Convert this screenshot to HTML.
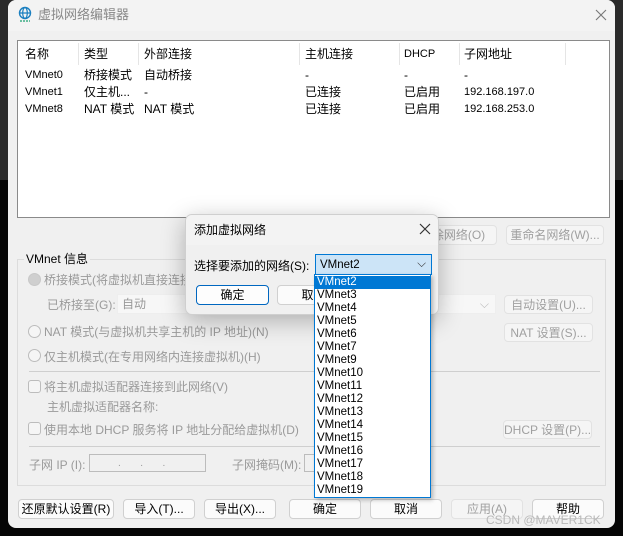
<!DOCTYPE html>
<html><head><meta charset="utf-8"><style>
*{box-sizing:border-box;margin:0;padding:0}
body{width:623px;height:536px;overflow:hidden;background:linear-gradient(#2a2a2a 0,#2a2a2a 180px,#050505 180px);font-family:"Liberation Sans","Noto Sans CJK SC",sans-serif;font-size:12px;line-height:14px;color:#000;position:relative}
.a{position:absolute;white-space:nowrap}
#win{left:8px;top:0;width:607px;height:528px;background:#f0f0f0;border-radius:8px;overflow:hidden}
.tb{left:0;top:0;width:607px;height:31px;background:#f3f3f3}
.btn{position:absolute;background:#fbfbfb;border:1px solid #d0d0d0;border-radius:4px;text-align:center;line-height:18px;font-size:12px}
.dis{color:#a0a0a0;background:#f5f5f5;border-color:#e2e2e2}
.g{color:#9a9a9a}
.radio{position:absolute;width:13px;height:13px;border:1px solid #bcbcbc;border-radius:50%;background:#f5f5f5}
.chk{position:absolute;width:13px;height:13px;border:1px solid #bcbcbc;border-radius:3px;background:#f5f5f5}
.dd div{height:13px;line-height:13px;padding-left:2px;font-size:11.5px}
</style></head><body>
<div id="win" class="a">
 <div class="a tb"></div>
 <svg class="a" style="left:10px;top:6px" width="14" height="16" viewBox="0 0 14 16"><circle cx="7" cy="7" r="5.5" fill="none" stroke="#1a7fc0" stroke-width="1.4"/><ellipse cx="7" cy="7" rx="2.3" ry="5.5" fill="none" stroke="#1a7fc0" stroke-width="1.2"/><line x1="1.5" y1="7" x2="12.5" y2="7" stroke="#1a7fc0" stroke-width="1.2"/><line x1="2" y1="15" x2="12" y2="15" stroke="#1aa070" stroke-width="1.2" stroke-dasharray="2 1"/></svg>
 <div class="a" style="left:30px;top:8px;font-size:13px;color:#888">虚拟网络编辑器</div>
 <svg class="a" style="left:587px;top:9px" width="12" height="12" viewBox="0 0 12 12"><path d="M1 1L11 11M11 1L1 11" stroke="#777" stroke-width="1.1"/></svg>
 <div class="a" style="left:9px;top:40px;width:593px;height:178px;background:#fff;border:1px solid #8a8a8a"></div>
 <div class="a" style="left:10px;top:41px;width:591px;height:24px;">
  <div class="a" style="left:60px;top:2px;width:1px;height:22px;background:#e5e5e5"></div>
  <div class="a" style="left:120px;top:2px;width:1px;height:22px;background:#e5e5e5"></div>
  <div class="a" style="left:281px;top:2px;width:1px;height:22px;background:#e5e5e5"></div>
  <div class="a" style="left:381px;top:2px;width:1px;height:22px;background:#e5e5e5"></div>
  <div class="a" style="left:441px;top:2px;width:1px;height:22px;background:#e5e5e5"></div>
  <div class="a" style="left:547px;top:2px;width:1px;height:22px;background:#e5e5e5"></div>
 </div>
 <div class="a" style="left:17px;top:47px">名称</div><div class="a" style="left:76px;top:47px">类型</div><div class="a" style="left:136px;top:47px">外部连接</div><div class="a" style="left:297px;top:47px">主机连接</div><div class="a" style="left:396px;top:47px;font-size:11px">DHCP</div><div class="a" style="left:456px;top:47px">子网地址</div>
 <div class="a" style="left:17px;top:68px;font-size:11px">VMnet0</div><div class="a" style="left:76px;top:68px">桥接模式</div><div class="a" style="left:136px;top:68px">自动桥接</div><div class="a" style="left:297px;top:68px">-</div><div class="a" style="left:396px;top:68px">-</div><div class="a" style="left:456px;top:68px">-</div>
 <div class="a" style="left:17px;top:85px;font-size:11px">VMnet1</div><div class="a" style="left:76px;top:85px">仅主机...</div><div class="a" style="left:136px;top:85px">-</div><div class="a" style="left:297px;top:85px">已连接</div><div class="a" style="left:396px;top:85px">已启用</div><div class="a" style="left:456px;top:85px;font-size:11px">192.168.197.0</div>
 <div class="a" style="left:17px;top:102px;font-size:11px">VMnet8</div><div class="a" style="left:76px;top:102px">NAT 模式</div><div class="a" style="left:136px;top:102px">NAT 模式</div><div class="a" style="left:297px;top:102px">已连接</div><div class="a" style="left:396px;top:102px">已启用</div><div class="a" style="left:456px;top:102px;font-size:11px">192.168.253.0</div>
 <div class="btn dis" style="left:400px;top:225px;width:89px;height:20px">移除网络(O)</div>
 <div class="btn dis" style="left:498px;top:225px;width:98px;height:20px">重命名网络(W)...</div>
 <div class="a" style="left:9px;top:259px;width:589px;height:227px;border:1px solid #dcdcdc"></div>
 <div class="a" style="left:16px;top:252px;background:#f0f0f0;padding:0 2px">VMnet 信息</div>
 <div class="radio" style="left:20px;top:273px;background:#cfcfcf;border-color:#c8c8c8"></div>
 <div class="a g" style="left:36px;top:273px">桥接模式(将虚拟机直接连接到外部网络)(B)</div>
 <div class="a g" style="left:39px;top:298px">已桥接至(G):</div>
 <div class="a" style="left:109px;top:294px;width:379px;height:20px;background:#f7f7f7;border:1px solid #eee;padding:2px 4px;color:#999">自动<span style="position:absolute;right:6px;color:#bbb">⌵</span></div>
 <div class="btn dis" style="left:496px;top:295px;width:89px;height:19px">自动设置(U)...</div>
 <div class="radio" style="left:20px;top:325px"></div>
 <div class="a g" style="left:36px;top:325px">NAT 模式(与虚拟机共享主机的 IP 地址)(N)</div>
 <div class="btn dis" style="left:496px;top:323px;width:89px;height:19px">NAT 设置(S)...</div>
 <div class="radio" style="left:20px;top:349px"></div>
 <div class="a g" style="left:36px;top:350px">仅主机模式(在专用网络内连接虚拟机)(H)</div>
 <div class="a" style="left:21px;top:371px;width:571px;height:1px;background:#cfcfcf"></div>
 <div class="chk" style="left:20px;top:380px"></div>
 <div class="a g" style="left:36px;top:380px">将主机虚拟适配器连接到此网络(V)</div>
 <div class="a g" style="left:39px;top:400px">主机虚拟适配器名称:</div>
 <div class="chk" style="left:20px;top:422px"></div>
 <div class="a g" style="left:36px;top:423px">使用本地 DHCP 服务将 IP 地址分配给虚拟机(D)</div>
 <div class="btn dis" style="left:495px;top:420px;width:89px;height:19px">DHCP 设置(P)...</div>
 <div class="a" style="left:21px;top:446px;width:571px;height:1px;background:#cfcfcf"></div>
 <div class="a g" style="left:21px;top:458px">子网 IP (I):</div>
 <div class="a" style="left:81px;top:454px;width:117px;height:18px;border:1px solid #bcbcbc;background:#f0f0f0;color:#999;font-size:10px;padding-left:28px;padding-top:2px">.&nbsp;&nbsp;&nbsp;&nbsp;&nbsp;&nbsp;&nbsp;.&nbsp;&nbsp;&nbsp;&nbsp;&nbsp;&nbsp;&nbsp;.</div>
 <div class="a g" style="left:224px;top:458px">子网掩码(M):</div>
 <div class="a" style="left:296px;top:454px;width:30px;height:18px;border:1px solid #bcbcbc;background:#f0f0f0"></div>
 <div class="btn" style="left:10px;top:499px;width:96px;height:20px">还原默认设置(R)</div>
 <div class="btn" style="left:115px;top:499px;width:72px;height:20px">导入(T)...</div>
 <div class="btn" style="left:196px;top:499px;width:72px;height:20px">导出(X)...</div>
 <div class="btn" style="left:281px;top:499px;width:72px;height:20px">确定</div>
 <div class="btn" style="left:362px;top:499px;width:72px;height:20px">取消</div>
 <div class="btn dis" style="left:443px;top:499px;width:72px;height:20px">应用(A)</div>
 <div class="btn" style="left:524px;top:499px;width:72px;height:20px">帮助</div>
 <div class="a" style="left:478px;top:513px;color:#b8b8b8;font-size:12px">CSDN @MAVER1CK</div>
</div>
<div class="a" style="left:185px;top:214px;width:254px;height:101px;background:#f0f0f0;border:1px solid #cfcfcf;border-radius:7px;box-shadow:0 6px 24px rgba(0,0,0,.28);overflow:hidden">
 <div class="a" style="left:0;top:0;width:254px;height:30px;background:#f3f3f3"></div>
 <div class="a" style="left:8px;top:8px">添加虚拟网络</div>
 <svg class="a" style="left:233px;top:8px" width="12" height="12" viewBox="0 0 12 12"><path d="M1 1L11 11M11 1L1 11" stroke="#333" stroke-width="1.2"/></svg>
 <div class="a" style="left:8px;top:44px">选择要添加的网络(S):</div>
 <div class="a" style="left:129px;top:39px;width:117px;height:21px;background:#cce4f7;border:1px solid #0078d4;padding:3px 4px;font-size:11.5px">VMnet2<span style="position:absolute;right:5px;top:2px;color:#333">⌵</span></div>
 <div class="btn" style="left:10px;top:70px;width:73px;height:20px;border:1px solid #0067c0;background:#fdfdfd">确定</div>
 <div class="btn" style="left:91px;top:70px;width:73px;height:20px">取消</div>
</div>
<div class="a dd" style="left:314px;top:274px;width:117px;height:224px;background:#fff;border:1px solid #0078d4;box-shadow:2px 2px 4px rgba(0,0,0,.25);padding-top:1px">
 <div style="background:#0078d4;color:#fff">VMnet2</div><div>VMnet3</div><div>VMnet4</div><div>VMnet5</div><div>VMnet6</div><div>VMnet7</div><div>VMnet9</div><div>VMnet10</div><div>VMnet11</div><div>VMnet12</div><div>VMnet13</div><div>VMnet14</div><div>VMnet15</div><div>VMnet16</div><div>VMnet17</div><div>VMnet18</div><div>VMnet19</div>
</div>
</body></html>
